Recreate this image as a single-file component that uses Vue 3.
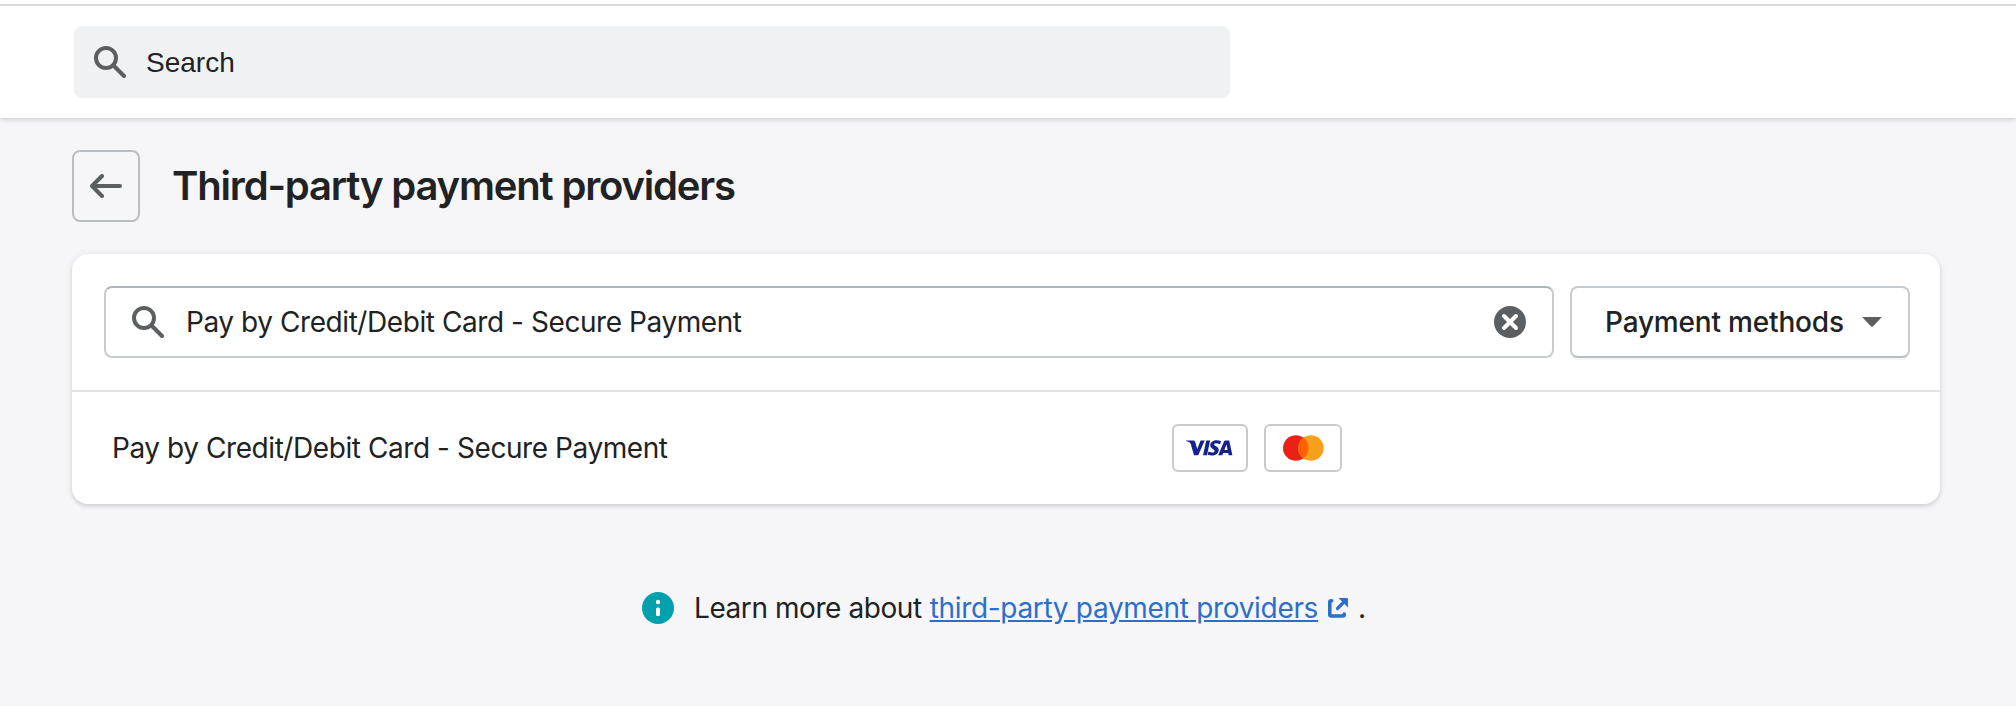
<script setup>
const label = 'Pay by Credit/Debit Card - Secure Payment'
</script>

<template>
  <div class="page">
    <header class="topbar">
      <div class="global-search">
        <svg class="icon" viewBox="0 0 32 32"><circle cx="12" cy="12" r="10" /><path d="M19.5 19.5 30 30" /></svg>
        <span class="placeholder">Search</span>
      </div>
    </header>
    <main>
      <div class="heading">
        <button class="back" aria-label="Back">
          <svg width="32" height="24" viewBox="0 0 32 24"><path d="M30 12H2M12 2 2 12l10 10" /></svg>
        </button>
        <h1>Third-party payment providers</h1>
      </div>
      <section class="card">
        <div class="filters">
          <div class="field">
            <svg class="icon" viewBox="0 0 32 32"><circle cx="12" cy="12" r="10" /><path d="M19.5 19.5 30 30" /></svg>
            <span class="value">{{ label }}</span>
            <svg class="clear" viewBox="0 0 32 32"><circle cx="16" cy="16" r="16" /><path d="m10 10 12 12M22 10 10 22" /></svg>
          </div>
          <button class="methods">
            <span>Payment methods</span>
            <svg width="20" height="10" viewBox="0 0 20 10"><path d="M1 0h18q1 0 .2.8l-8.400 8.600q-.8.8-1.600 0L.8.8Q0 0 1 0Z" /></svg>
          </button>
        </div>
        <div class="provider">
          <span class="name">{{ label }}</span>
          <div class="brands">
            <span class="brand visa">
              <svg width="47" height="16" viewBox="0 0 47 16">
                <path d="M0 .5h7.300q1.500 0 1.900 1.400l2 7.200L14.600.5h4.100L12.200 15.300H8L4.800 4.200Q4 1.500 0 .900Z" />
                <path d="M20.200.5h3.900l-3.100 14.800h-3.900Z" />
                <path d="M35 1 34.200 4.200Q28.300 2.100 28.100 4.500C28 5.900 33 6.500 32.700 10.300 32.300 15.500 26.300 16.500 21.700 14.700L22.500 11.400Q28.300 13.900 28.600 10.900C28.700 9.300 24 8.800 24.200 5.100 24.500.3 30.500-.9 35 1Z" />
                <path fill-rule="evenodd" d="M39.500.5h3.700l3.200 14.800h-3.700l-.5-2.300h-5l-1 2.300h-4L38 1.500q.4-1 1.500-1ZM40.500 4.500l-2.100 5.500h3.200Z" />
              </svg>
            </span>
            <span class="brand mc">
              <svg width="42" height="26" viewBox="0 0 42 26">
                <circle cx="13.800" cy="13" r="12.800" fill="#eb2118" /><circle cx="28.900" cy="13" r="12.800" fill="#f8a01e" />
                <path d="M21.350 2.700a12.800 12.800 0 0 1 0 20.600a12.800 12.800 0 0 1 0-20.600Z" fill="#ff6002" />
              </svg>
            </span>
          </div>
        </div>
      </section>
      <footer class="help">
        <svg class="info" viewBox="0 0 32 32"><circle cx="16" cy="16" r="16" /><circle class="mark" cx="16" cy="10" r="2.200" /><rect class="mark" x="14" y="15.500" width="4" height="8.500" rx="1.500" /></svg>
        <span class="about">Learn more about</span>
        <a class="link">third-party payment providers</a>
        <svg class="external" width="20" height="20" viewBox="0 0 20 20"><path d="M3.700 2.800H3.200Q1.800 2.800 1.800 4.200v12.400Q1.800 18 3.200 18h11.600q1.400 0 1.400-1.400V16" /><path class="shaft" d="M9.500 10.500 17 3" /><path class="head" d="M10.500 0H19q1 0 1 1v8.500L16.500 6 14 3.500Z" /></svg>
        <span>.</span>
      </footer>
    </main>
  </div>
</template>

<style>
body { margin: 0; background: #f6f6f8; }
</style>

<style scoped>
* { box-sizing: border-box; }
.page { height: 706px; overflow: hidden; background: #f6f6f8; color: #202223; font: 400 28px/40px Inter, "Liberation Sans", sans-serif; }
.topbar { height: 114px; margin-top: 4px; padding: 20px 74px 0; border-top: 2px solid #d9d9db; background: #fff; box-shadow: 0 -4px #fff, 0 2px 4px rgba(0, 0, 0, .15); }
.global-search { display: flex; align-items: center; gap: 20px; width: 1156px; height: 72px; padding-left: 20px; border-radius: 8px; background: #f0f1f3; font-family: "Liberation Sans", Arial, sans-serif; }
.placeholder { padding-top: 1px; }
.icon { width: 32px; height: 32px; flex: none; fill: none; stroke: #5c5f62; stroke-width: 4; stroke-linecap: round; }
main { padding: 32px 76px 0 72px; }
.heading { display: flex; align-items: center; gap: 32px; }
.back { display: grid; place-items: center; width: 68px; height: 72px; padding: 0; border: 2px solid #babec3; border-radius: 8px; background: none; }
.back svg { fill: none; stroke: #5c5f62; stroke-width: 4; stroke-linecap: round; stroke-linejoin: round; }
h1 { margin: 0; font-size: 40px; line-height: 56px; font-weight: 600; letter-spacing: -1.180px; white-space: nowrap; }
.card { margin-top: 32px; border-radius: 16px; background: #fff; box-shadow: 0 0 10px rgba(23, 24, 24, .05), 0 2px 4px rgba(0, 0, 0, .15); }
.filters { display: flex; gap: 16px; padding: 32px 30px 32px 32px; border-bottom: 2px solid #e1e3e5; }
.field { display: flex; align-items: center; flex: 1; height: 72px; padding: 0 26px; border: 2px solid #c9cccf; border-top-color: #aeb4b9; border-radius: 8px; }
.value { margin-left: 22px; letter-spacing: -.430px; white-space: nowrap; }
.clear { width: 32px; height: 32px; margin-left: auto; fill: #5c5f62; stroke: none; }
.clear path { stroke: #fff; stroke-width: 4; stroke-linecap: round; }
.methods { display: flex; align-items: center; width: 340px; height: 72px; padding: 0 0 0 33px; gap: 18px; border: 2px solid #c9cccf; border-bottom-color: #babfc3; border-radius: 8px; background: #fff; box-shadow: 0 2px rgba(0, 0, 0, .04); font: inherit; font-weight: 500; letter-spacing: -.180px; color: inherit; }
.methods svg { fill: #5c5f62; }
.provider { display: flex; align-items: center; height: 112px; padding-left: 40px; }
.name { width: 1060px; letter-spacing: -.430px; }
.brands { display: flex; gap: 16px; }
.brand { display: grid; place-items: center; width: 76px; height: 48px; border: 2px solid #c9cacb; border-radius: 6px; }
.visa svg { margin-right: 2px; fill: #14248a; }
.mc { width: 78px; }
.help { display: flex; align-items: center; height: 40px; margin: 84px 0 0 570px; white-space: pre; }
.info { width: 32px; height: 32px; fill: #00a0ac; }
.mark { fill: #fff; }
.about { margin-left: 20px; letter-spacing: -.430px; }
.link { margin-left: 8px; color: #2c6ecb; letter-spacing: -.320px; text-decoration: underline; }
.external { margin: 0 10px; fill: none; stroke: #2c6ecb; stroke-width: 3.600; stroke-linecap: round; }
.shaft { stroke-width: 3.200; }
.head { fill: #2c6ecb; stroke: none; }
</style>
